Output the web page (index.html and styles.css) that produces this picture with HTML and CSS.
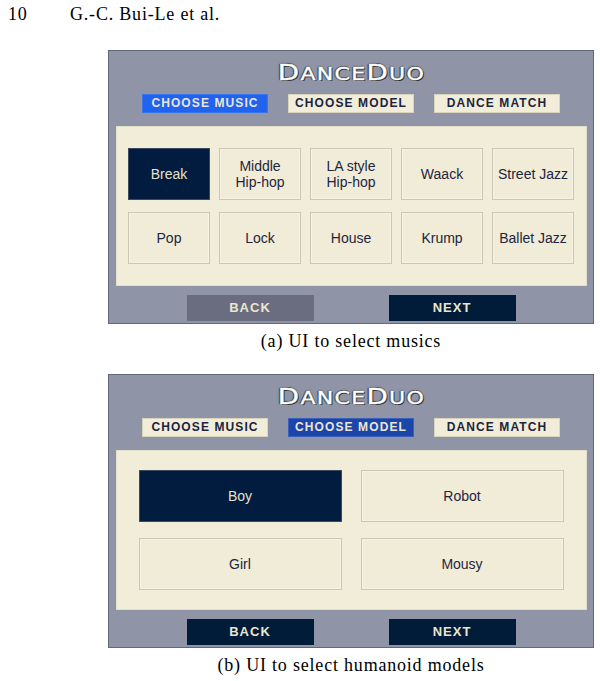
FILE: index.html
```html
<!DOCTYPE html>
<html lang="en">
<head>
    <meta charset="UTF-8">
    <meta name="viewport" content="width=device-width, initial-scale=1.0">
    <title>DanceDuo</title>
    <link rel="stylesheet" href="styles.css">
</head>
<body>
    <div class="page-head">
        <span class="page-no">10</span>
        <span class="authors">G.-C. Bui-Le et al.</span>
    </div>

    <div class="figure">
        <div class="panel">
            <div class="title">D<span class="sc">ANCE</span>D<span class="sc">UO</span></div>
            <div class="tabs">
                <div class="tab active-music">CHOOSE MUSIC</div>
                <div class="tab">CHOOSE MODEL</div>
                <div class="tab">DANCE MATCH</div>
            </div>
            <div class="content">
                <div class="grid music-grid">
                    <div class="card selected">Break</div>
                    <div class="card">Middle<br>Hip-hop</div>
                    <div class="card">LA style<br>Hip-hop</div>
                    <div class="card">Waack</div>
                    <div class="card">Street Jazz</div>
                    <div class="card">Pop</div>
                    <div class="card">Lock</div>
                    <div class="card">House</div>
                    <div class="card">Krump</div>
                    <div class="card">Ballet Jazz</div>
                </div>
            </div>
            <div class="nav">
                <div class="nav-btn back-disabled">BACK</div>
                <div class="nav-btn">NEXT</div>
            </div>
        </div>
        <div class="caption">(a) UI to select musics</div>
    </div>

    <div class="figure second">
        <div class="panel">
            <div class="title">D<span class="sc">ANCE</span>D<span class="sc">UO</span></div>
            <div class="tabs">
                <div class="tab">CHOOSE MUSIC</div>
                <div class="tab active-model">CHOOSE MODEL</div>
                <div class="tab">DANCE MATCH</div>
            </div>
            <div class="content">
                <div class="grid model-grid">
                    <div class="card selected">Boy</div>
                    <div class="card">Robot</div>
                    <div class="card">Girl</div>
                    <div class="card">Mousy</div>
                </div>
            </div>
            <div class="nav">
                <div class="nav-btn">BACK</div>
                <div class="nav-btn">NEXT</div>
            </div>
        </div>
        <div class="caption">(b) UI to select humanoid models</div>
    </div>
</body>
</html>
```

FILE: styles.css
```css
body {
    margin: 0;
    background: #fff;
    color: #000;
    font-family: "Liberation Sans", Arial, sans-serif;
}
.page-head {
    display: flex;
    padding: 4px 0 0 8px;
    height: 20px;
    font-family: "Liberation Serif", "Times New Roman", serif;
    font-size: 18px;
    line-height: 20px;
    letter-spacing: 0.8px;
}
.page-no {
    width: 62px;
}
.figure {
    width: 486px;
    margin: 26px 0 0 108px;
}
.figure.second {
    margin-top: 21px;
}
.panel {
    box-sizing: border-box;
    height: 274px;
    border: 1px solid #626779;
    background: #8f94a6;
    display: flex;
    flex-direction: column;
    align-items: center;
    padding-top: 10px;
}
.title {
    font-family: "DejaVu Sans", sans-serif;
    font-size: 22px;
    line-height: 24px;
    letter-spacing: 1px;
    color: #fff;
    -webkit-text-stroke: 0.4px #fff;
    text-shadow: 0 0 1px #1e1e1e, 1px 1px 0 #333, -1px 0 1px #444, 0 -1px 1px #555;
    transform: scaleX(1.26);
}
.title .sc {
    font-size: 17.5px;
}
.tabs {
    display: flex;
    gap: 20px;
    margin-top: 8px;
}
.tab {
    box-sizing: border-box;
    width: 126px;
    height: 19px;
    border: 1px solid #d9d4be;
    background: #f2edd8;
    color: #1b2440;
    font-size: 12px;
    font-weight: bold;
    letter-spacing: 1.1px;
    line-height: 17px;
    text-align: center;
}
.tab.active-music {
    background: #1f63ef;
    border-color: #3a75ef;
    color: #ebe6d2;
}
.tab.active-model {
    background: #1b45a8;
    border-color: #3a5fb8;
    color: #ebe6d2;
}
.content {
    box-sizing: border-box;
    width: 471px;
    height: 160px;
    margin-top: 13px;
    background: #f2edd8;
    border: 1px solid #e4dfca;
    display: flex;
    align-items: center;
    justify-content: center;
    padding-bottom: 1px;
}
.grid {
    display: grid;
}
.music-grid {
    grid-template-columns: repeat(5, 82px);
    grid-auto-rows: 52px;
    gap: 12px 9px;
}
.model-grid {
    grid-template-columns: repeat(2, 203px);
    grid-auto-rows: 52px;
    gap: 16px 19px;
}
.card {
    box-sizing: border-box;
    display: flex;
    align-items: center;
    justify-content: center;
    text-align: center;
    background: #f1ecd7;
    border: 1px solid #cbc7b4;
    box-shadow: inset 0 0 0 1px #f6f2e2;
    color: #1c2641;
    font-size: 14px;
    line-height: 16px;
}
.card.selected {
    background: #011c3f;
    border-color: #3b4a60;
    box-shadow: none;
    color: #e6e1cc;
}
.nav {
    display: flex;
    gap: 75px;
    margin-top: 9px;
}
.nav-btn {
    width: 127px;
    height: 26px;
    background: #011c38;
    color: #ece6cf;
    font-size: 13px;
    font-weight: bold;
    letter-spacing: 1px;
    line-height: 26px;
    text-align: center;
}
.nav-btn.back-disabled {
    background: #6a6d7f;
}
.caption {
    margin-top: 5px;
    font-family: "Liberation Serif", "Times New Roman", serif;
    font-size: 18px;
    line-height: 24px;
    letter-spacing: 0.8px;
    text-align: center;
}
```
